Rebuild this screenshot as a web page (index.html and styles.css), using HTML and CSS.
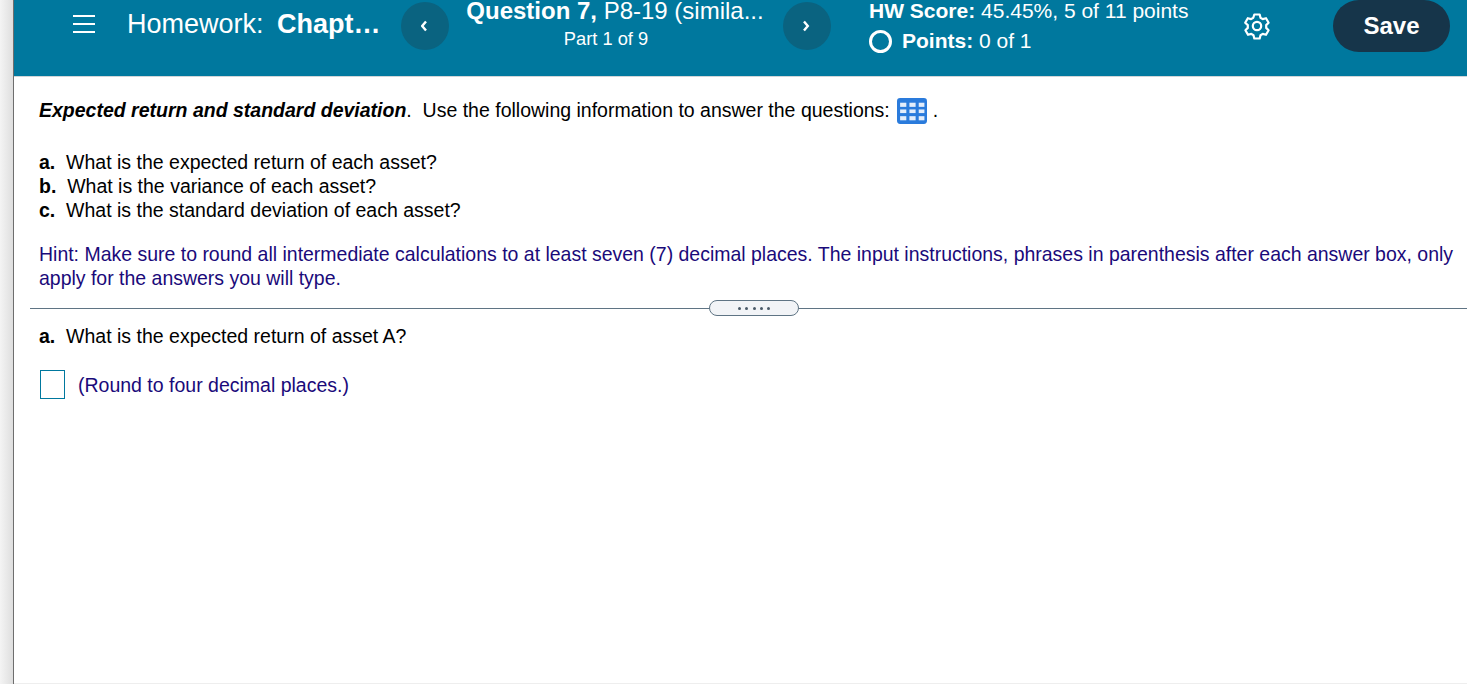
FILE: index.html
```html
<!DOCTYPE html>
<html lang="en">
<head>
<meta charset="utf-8">
<title>Homework</title>
<link rel="stylesheet" href="styles.css">
</head>
<body>
<div class="app">
  <div class="gutter"></div>
  <main class="main">
    <header class="topbar">
      <svg class="menu" width="22" height="20" viewBox="0 0 22 20" aria-hidden="true"><path d="M0 2h22M0 10h22M0 18h22" stroke="#fff" stroke-width="2.200" fill="none"/></svg>
      <div class="title"><span>Homework:</span> <b>Chapt…</b></div>
      <button class="nav prev"><svg width="8" height="12" viewBox="0 0 8 12"><path d="M5 1.500 1.200 6 5 10.500" stroke="#fff" stroke-width="2.400" fill="none"/></svg></button>
      <div class="question">
        <div class="qline"><b>Question 7,</b> P8-19 (simila...</div>
        <div class="part">Part 1 of 9</div>
      </div>
      <button class="nav next"><svg width="8" height="12" viewBox="0 0 8 12"><path d="M1 1.500 4.800 6 1 10.500" stroke="#fff" stroke-width="2.400" fill="none"/></svg></button>
      <div class="score">
        <div class="hw"><b>HW Score:</b> 45.45%, 5 of 11 points</div>
        <div class="points"><span class="ring"></span><span><b>Points:</b> 0 of 1</span></div>
      </div>
      <svg class="gear" width="28" height="28" viewBox="0 0 28 28" aria-hidden="true"><path d="M11.300 2.500h5.400l.8 3.300 2.200 1.300 3.300-.9 2.600 4.500-2.400 2.400v2.800l2.400 2.400-2.600 4.500-3.300-.9-2.200 1.300-.8 3.300h-5.400l-.8-3.300-2.200-1.300-3.300.9-2.600-4.500 2.400-2.400v-2.800L2.200 10.700l2.600-4.500 3.300.9 2.200-1.300z" stroke="#fff" stroke-width="2.200" stroke-linejoin="round" fill="none"/><circle cx="14" cy="14" r="4.200" stroke="#fff" stroke-width="2.200" fill="none"/></svg>
      <button class="save">Save</button>
    </header>
    <section class="content">
      <p class="intro"><b><i>Expected return and standard deviation</i></b>.&nbsp; Use the following information to answer the questions:<svg class="grid-icon" width="30" height="26" viewBox="0 0 29 25" aria-hidden="true"><rect width="29" height="25" rx="3" fill="#2a7bdc"/><g fill="#e3edfb"><rect x="3" y="4.500" width="6" height="4"/><rect x="12" y="4.500" width="6" height="4"/><rect x="21" y="4.500" width="5.500" height="4"/><rect x="3" y="11" width="6" height="3.500"/><rect x="12" y="11" width="6" height="3.500"/><rect x="21" y="11" width="5.500" height="3.500"/><rect x="3" y="17.500" width="6" height="4"/><rect x="12" y="17.500" width="6" height="4"/><rect x="21" y="17.500" width="5.500" height="4"/></g></svg>.</p>
      <ul class="questions">
        <li><b>a.</b>&nbsp; What is the expected return of each asset?</li>
        <li><b>b.</b>&nbsp; What is the variance of each asset?</li>
        <li><b>c.</b>&nbsp; What is the standard deviation of each asset?</li>
      </ul>
      <p class="hint">Hint: Make sure to round all intermediate calculations to at least seven (7) decimal places. The input instructions, phrases in parenthesis after each answer box, only apply for the answers you will type.</p>
    </section>
    <div class="divider"><span class="pill"><i></i><i></i><i></i><i></i><i></i></span></div>
    <section class="answer">
      <p class="ask"><b>a.</b>&nbsp; What is the expected return of asset A?</p>
      <div class="entry"><span class="box"></span><span class="note">(Round to four decimal places.)</span></div>
    </section>
  </main>
</div>
</body>
</html>
```
FILE: styles.css
```css
* { box-sizing: border-box; }
html, body { margin: 0; height: 100%; overflow: hidden; }
body { font-family: "Liberation Sans", Arial, sans-serif; font-size: 19.5px; color: #000; background: #fff; }
.app { display: flex; height: 684px; }
.gutter { width: 14px; flex: none; background: linear-gradient(to right, #f4f4f4, #dedede); border-right: 1px solid #6e6e6e; }
.main { flex: 1; min-width: 0; border-bottom: 1px solid #eee; }
.topbar { display: flex; align-items: flex-start; height: 77px; background: #00789e; border-bottom: 1px solid #d0d5d8; color: #fff; }
.menu { flex: none; margin: 14px 0 0 59px; }
.title { flex: none; width: 274px; margin: 6px 0 0 32px; font-size: 27px; line-height: 36px; white-space: nowrap; word-spacing: 6px; }
.nav { flex: none; display: flex; align-items: center; justify-content: center; width: 48px; height: 48px; margin-top: 2px; padding: 0; border: 0; border-radius: 50%; background: #0a6380; }
.question { flex: none; width: 334px; text-align: center; padding-right: 2px; }
.qline { font-size: 24px; line-height: 22px; white-space: nowrap; }
.part { margin-top: 7px; padding-right: 18px; font-size: 18.300px; line-height: 20px; }
.score { flex: none; width: 375px; margin-left: 37px; font-size: 21px; }
.hw { line-height: 22px; padding-left: 1px; white-space: nowrap; }
.points { display: flex; align-items: center; gap: 10px; margin-top: 6px; margin-left: 1px; line-height: 26px; }
.ring { width: 23px; height: 23px; border: 3px solid #fff; border-radius: 50%; }
.gear { flex: none; margin-top: 12px; }
.save { flex: none; width: 117px; height: 52px; margin-left: 62px; padding: 0; border: 0; border-radius: 26px; background: #16354a; color: #fff; font: bold 24px "Liberation Sans", Arial, sans-serif; }
.content { padding: 19px 5px 0 25px; }
.intro { margin: 0; line-height: 28px; height: 28px; white-space: nowrap; }
.grid-icon { vertical-align: -7px; margin: 0 6px 0 7px; }
.questions { list-style: none; margin: 26px 0 0; padding: 0; line-height: 24px; }
.hint { margin: 20px 0 0; font-size: 19.480px; line-height: 24px; color: #1a0a7a; }
.divider { height: 1px; margin: 18px 0 0 16px; background: #5f7484; display: flex; justify-content: center; }
.pill { display: flex; align-items: center; justify-content: center; gap: 4.300px; flex: none; width: 90px; height: 16px; margin-top: -8px; margin-left: 11px; border: 1px solid #5f7484; border-radius: 8px; background: #f2f4f7; }
.pill i { width: 3px; height: 3px; border-radius: 50%; background: #4a5a68; }
.answer { padding: 0 0 0 25px; }
.ask { margin: 15px 0 0; line-height: 24px; }
.entry { display: flex; align-items: center; gap: 13px; margin-top: 22px; margin-left: 1px; color: #1a0a7a; }
.box { width: 25px; height: 29px; border: 1px solid #00789e; background: #fff; }
.note { line-height: 24px; }
```
